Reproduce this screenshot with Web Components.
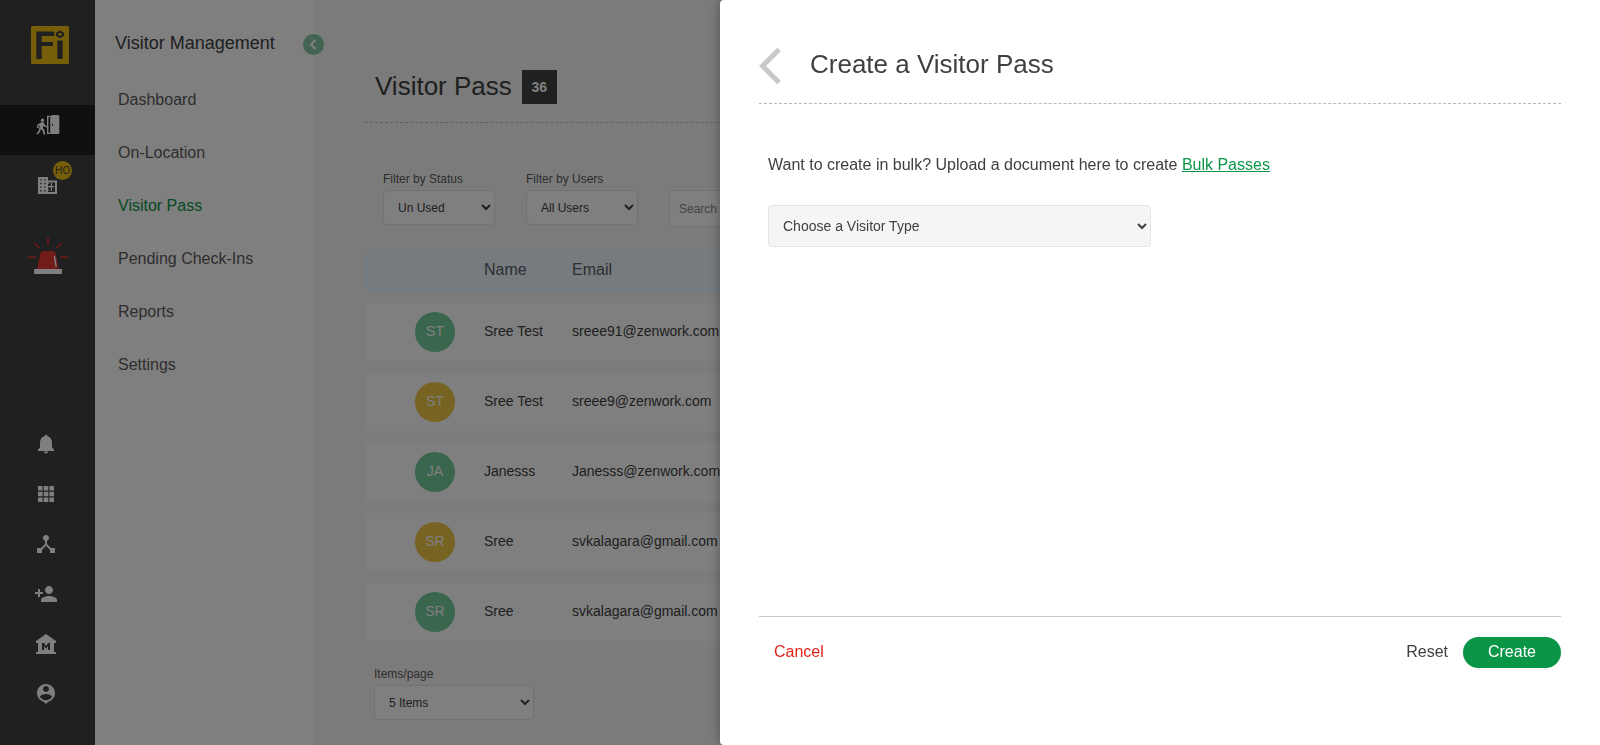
<!DOCTYPE html>
<html lang="en">
<head>
<meta charset="utf-8">
<title>Visitor Pass</title>
<style>
  html, body { margin: 0; height: 100%; }
  body { font-family: "Liberation Sans", Arial, sans-serif; font-size: 16px; color: #404040; background: #f6f6f6; }
</style>
</head>
<body>
<visitor-app></visitor-app>

<template id="t-app">
  <style>
    :host { display: grid; grid-template-columns: 95px 220px minmax(0, 1fr); min-height: 100vh; overflow: hidden; }
    .scrim { position: fixed; inset: 0; background: rgba(0, 0, 0, .5); z-index: 5; }
    create-drawer { z-index: 6; }
  </style>
  <icon-rail></icon-rail>
  <side-menu heading="Visitor Management">
    <menu-link>Dashboard</menu-link>
    <menu-link>On-Location</menu-link>
    <menu-link active>Visitor Pass</menu-link>
    <menu-link>Pending Check-Ins</menu-link>
    <menu-link>Reports</menu-link>
    <menu-link>Settings</menu-link>
  </side-menu>
  <pass-list></pass-list>
  <div class="scrim"></div>
  <create-drawer></create-drawer>
</template>

<template id="t-rail">
  <style>
    :host { display: flex; flex-direction: column; background: #404040; color: #fff; }
    a { display: flex; justify-content: center; color: inherit; text-decoration: none; }
    svg { display: block; fill: currentColor; }
    .logo { padding: 26px 0 41px 5px; }
    .door { background: #202020; height: 40px; padding-top: 10px; }
    .office { padding: 22px 0 5px; position: relative; }
    .badge { position: absolute; left: 53px; top: 6px; width: 19px; height: 19px; border-radius: 50%; background: #eebd12; color: #404040; font-family: Inter, sans-serif; font-size: 10px; line-height: 19px; text-align: center; }
    .alarm { padding-top: 36px; }
    .bottom { margin-top: auto; padding: 0 3px 39px 0; display: flex; flex-direction: column; gap: 26px; }
  </style>
  <a class="logo" href="#" aria-label="Home"><svg width="38" height="38" viewBox="0 0 38 38"><path fill="#eebd12" d="M1 0h36l1 1v36l-1 1H1l-1-1V1z"/><path fill="#404040" d="M5.300 5.500h18v4.500H10.700v6H22v4H10.700v13H5.300zM26.300 14.500h5.400V33h-5.400z"/><path fill="none" stroke="#404040" stroke-width="2" d="M29 5.700l3 1.600v2L29 11l-3-1.700v-2z"/></svg></a>
  <a class="door" href="#" aria-label="Visitors"><svg width="24" height="20" viewBox="0 0 24 20"><circle cx="6.500" cy="5.200" r="1.700"/><path d="M5.200 7.200l2.600.4 1.400 2.700 1.900.9-.6 1.300-2.500-1-.5-.8-.6 2.400 1.600 2.200.8 4.100H7.500l-.7-3.400-2-1.900-.6 2.300-2.400 3.200-1.500-.9 2.300-3L3.800 10l-1 .7-.5 2.200H.7l.8-3.200z"/><path d="M11 .8h3v1.400h-1.600v15.600H14V19h-3z"/><path fill-rule="evenodd" d="M14.200 1.200L16 0h6.500l.8 1v17.500l-.8.5H14.200zM16 9v1.800h1V9z"/></svg></a>
  <a class="office" href="#" aria-label="Offices"><svg width="19" height="17" viewBox="0 0 19 17"><path fill-rule="evenodd" d="M0 0h10v3.500h9V17H0zM2.200 2.200v1.400h1.400V2.200zM6.200 2.200v1.400h1.400V2.200zM2.200 5.800v1.400h1.400V5.800zM6.200 5.800v1.400h1.400V5.800zM2.200 9.400v1.400h1.400V9.400zM6.200 9.400v1.400h1.400V9.400zM2.200 13v1.400h1.400V13zM6.200 13v1.400h1.400V13zM10 5.500V15h7V5.500z"/><path d="M12.800 6h1.200v3h2.500v1.200H14V14h-1.200v-3.800H10V9h2.800zM10 6h1v1h-1zM10 12.500h1v1h-1z"/></svg><span class="badge">HO</span></a>
  <a class="alarm" href="#" aria-label="Emergency"><svg width="40" height="40" viewBox="0 0 40 40"><path stroke="#e53935" stroke-width="1.500" d="M20 3v7.500M6.500 8l5.200 5.500M33.500 8l-5.200 5.500M.5 22H8M32 22h7.500"/><path fill="#e53935" d="M9 34.500l3-14.500q.6-4 3.500-4h9q2.900 0 3.500 4l2.800 14.500z"/><path d="M26.500 21.500l1.500 9.500" stroke="#fff" stroke-width="1.500" stroke-linecap="round"/><path d="M6 34h28v5H6z"/></svg></a>
  <nav class="bottom">
    <a href="#" aria-label="Notifications"><svg width="24" height="24" viewBox="0 0 24 24"><path d="M12 21.500c1.100 0 2-.9 2-2h-4c0 1.100.9 2 2 2zm6-6v-5c0-3.070-1.630-5.640-4.500-6.320-.2-2-2.800-2-3 0C7.640 4.860 6 7.420 6 10.500v5l-2 2v1.500h16v-1.500z"/></svg></a>
    <a href="#" aria-label="Apps"><svg width="24" height="24" viewBox="0 0 24 24"><path d="M4 4h4.600v4.600H4zM9.700 4h4.600v4.600H9.700zM15.400 4H20v4.600h-4.600zM4 9.700h4.600v4.600H4zM9.700 9.700h4.600v4.600H9.700zM15.400 9.700H20v4.600h-4.600zM4 15.400h4.600V20H4zM9.700 15.400h4.600V20H9.700zM15.400 15.400H20V20h-4.600z"/></svg></a>
    <a href="#" aria-label="Hierarchy"><svg width="24" height="24" viewBox="0 0 24 24"><path d="M17 16l-4-4V8.820C14.160 8.400 15 7.300 15 6c0-1.660-1.340-3-3-3S9 4.340 9 6c0 1.300.84 2.400 2 2.820V12l-4 4H3v5h5v-3.050l4-4.200 4 4.200V21h5v-5z"/></svg></a>
    <a href="#" aria-label="Add person"><svg width="24" height="24" viewBox="0 0 24 24"><path d="M15 12c2.210 0 4-1.790 4-4s-1.790-4-4-4-4 1.790-4 4 1.790 4 4 4zm-9-2V7H4v3H1v2h3v3h2v-3h3v-2zm9 4c-2.670 0-8 1.340-8 4v2h16v-2c0-2.660-5.330-4-8-4z"/></svg></a>
    <a href="#" aria-label="Museum"><svg width="24" height="24" viewBox="0 0 24 24"><path d="M22 11V9L12 2 2 9v2h2v9H2v2h20v-2h-2v-9zm-6 7h-2v-4l-2 3-2-3v4H8v-7h2l2 3 2-3h2z"/></svg></a>
    <a href="#" aria-label="Profile"><svg width="24" height="24" viewBox="0 0 24 24"><path d="M12 2c-4.970 0-9 4.030-9 9 0 4.170 2.840 7.670 6.690 8.690L12 22l2.310-2.310C18.160 18.670 21 15.170 21 11c0-4.970-4.030-9-9-9zm0 2c1.660 0 3 1.340 3 3s-1.340 3-3 3-3-1.340-3-3 1.340-3 3-3zm0 14.300c-2.500 0-4.710-1.280-6-3.220.03-1.990 4-3.080 6-3.080 1.990 0 5.970 1.090 6 3.080-1.290 1.940-3.500 3.220-6 3.220z"/></svg></a>
  </nav>
</template>

<template id="t-menu">
  <style>
    :host { display: block; background: #fff; position: relative; }
    h2 { margin: 0; padding: 32px 20px 19px; font-size: 18px; line-height: 22px; font-weight: 400; }
    nav { display: flex; flex-direction: column; }
    button { position: absolute; right: -9px; top: 34px; width: 21px; height: 21px; padding: 0; border: 0; border-radius: 50%; background: #84c8a4; display: grid; place-items: center; z-index: 1; }
  </style>
  <h2></h2>
  <button aria-label="Collapse menu"><svg width="21" height="21" viewBox="0 0 21 21" fill="none" stroke="#fff" stroke-width="2"><path d="M12.500 6L8 10.500l4.500 4.500"/></svg></button>
  <nav><slot></slot></nav>
</template>

<template id="t-link">
  <style>
    :host { display: block; }
    a { display: block; padding: 0 23px; line-height: 53px; color: #5c5c5c; text-decoration: none; }
    :host([active]) a { color: #0b9547; }
  </style>
  <a href="#"><slot></slot></a>
</template>

<template id="t-select">
  <style>
    :host { display: flex; flex-direction: column; gap: 4px; font-size: 12px; }
    label { line-height: 14px; color: #5c5c5c; }
    select { height: 35px; width: 100%; box-sizing: border-box; padding: 0 10px; border: 1px solid #e5e5e5; border-radius: 4px; background-color: #fff; color: #404040; font: inherit; }
    :host([large]) { font-size: 14px; }
    :host([large]) select { height: 42px; background-color: #f5f5f5; }
    label:empty { display: none; }
  </style>
  <label for="s"></label>
  <select id="s"></select>
</template>

<template id="t-avatar">
  <style>
    :host { display: block; width: 40px; height: 40px; line-height: 38px; text-align: center; border-radius: 50%; background: #74cc9c; color: #fff; font-size: 14px; }
    :host([tone="gold"]) { background: #eec644; }
  </style>
  <slot></slot>
</template>

<template id="t-list">
  <style>
    :host { display: block; padding: 70px 50px 20px; }
    header { display: flex; align-items: center; gap: 10px; padding: 0 10px 18px; border-bottom: 1px dashed #c0c0c0; }
    h1 { margin: 0; padding-bottom: 2px; font-size: 26px; line-height: 30px; font-weight: 400; }
    .count { width: 35px; background: #404040; color: #fff; font-size: 14px; font-weight: 700; line-height: 34px; text-align: center; }
    .filters { display: flex; align-items: flex-end; gap: 31px; padding: 49px 18px 0; }
    .filters pick-list { width: 112px; padding-bottom: 2px; }
    input { box-sizing: border-box; width: 240px; height: 37px; padding: 0 9px; border: 1px solid #e5e5e5; background: #fff; font: 12px "Liberation Sans", Arial, sans-serif; }
    input::placeholder { color: #8a8a8a; }
    table { width: 100%; table-layout: fixed; border-collapse: separate; border-spacing: 0 12px; margin-top: 10px; }
    th, td { padding: 0 13px; text-align: left; }
    th { height: 42px; background: #eaf6ff; font-weight: 400; color: #5c5c5c; }
    td { height: 56px; padding-bottom: 2px; background: #fff; font-size: 14px; }
    td.face { height: 57px; padding-bottom: 1px; }
    .face { width: 56px; padding-left: 50px; padding-right: 0; }
    .name { width: 62px; }
    .pager { width: 160px; margin: 14px 9px 0; }
  </style>
  <header><h1>Visitor Pass</h1><span class="count">36</span></header>
  <div class="filters">
    <pick-list label="Filter by Status" value="Un Used"></pick-list>
    <pick-list label="Filter by Users" value="All Users"></pick-list>
    <input type="text" placeholder="Search" aria-label="Search">
  </div>
  <table>
    <thead><tr><th class="face"></th><th class="name">Name</th><th>Email</th></tr></thead>
    <tbody></tbody>
  </table>
  <pick-list class="pager" label="Items/page" value="5 Items"></pick-list>
</template>

<template id="t-drawer">
  <style>
    :host { position: fixed; top: 0; right: 0; bottom: 0; width: 55%; box-sizing: border-box; padding: 0 39px 77px; display: flex; flex-direction: column; background: #fff; border-radius: 4px 0 0 4px; box-shadow: 0 0 12px rgba(0, 0, 0, .35); }
    header { display: flex; align-items: center; gap: 29px; padding: 46px 0 17px; border-bottom: 1px dashed #b8b8b8; }
    button { border: 0; padding: 0; background: none; font: inherit; color: #404040; }
    .back svg { display: block; }
    h2 { margin: 0; padding-bottom: 4px; font-size: 26px; line-height: 34px; font-weight: 400; }
    .body { flex: 1; padding: 52px 9px 0; }
    p { margin: 0 0 31px; line-height: 18px; }
    a { color: #0b9547; }
    pick-list { width: calc(50% - 9px); min-width: 200px; }
    footer { display: flex; border-top: 1px solid #c8c8c8; padding-top: 20px; }
    footer button { height: 31px; padding-bottom: 2px; }
    .cancel { padding-left: 15px; margin-right: auto; color: #e1251b; }
    .create { margin-left: 15px; width: 98px; border-radius: 16px; background: #0b9547; color: #fff; }
  </style>
  <header>
    <button class="back" aria-label="Back"><svg width="22" height="40" viewBox="0 0 22 40" fill="none" stroke="#c8c8c8" stroke-width="5"><path d="M20 3.500L3.500 20 20 36.500"/></svg></button>
    <h2>Create a Visitor Pass</h2>
  </header>
  <div class="body">
    <p>Want to create in bulk? Upload a document here to create <a href="#">Bulk Passes</a></p>
    <pick-list large value="Choose a Visitor Type"></pick-list>
  </div>
  <footer>
    <button class="cancel">Cancel</button>
    <button>Reset</button>
    <button class="create">Create</button>
  </footer>
</template>

<script>
  class Base extends HTMLElement {
    constructor() {
      super();
      this.attachShadow({ mode: "open" }).append(
        document.getElementById(this.constructor.template).content.cloneNode(true));
    }
    $(selector) { return this.shadowRoot.querySelector(selector); }
  }

  customElements.define("icon-rail", class extends Base { static template = "t-rail"; });
  customElements.define("menu-link", class extends Base { static template = "t-link"; });
  customElements.define("user-avatar", class extends Base { static template = "t-avatar"; });

  customElements.define("side-menu", class extends Base {
    static template = "t-menu";
    connectedCallback() { this.$("h2").textContent = this.getAttribute("heading"); }
  });

  customElements.define("pick-list", class extends Base {
    static template = "t-select";
    connectedCallback() {
      const label = this.getAttribute("label") || "";
      const value = this.getAttribute("value");
      this.$("label").textContent = label;
      if (!label) this.$("select").setAttribute("aria-label", value);
      this.$("select").replaceChildren(new Option(value));
    }
  });

  const visitors = [
    ["ST", "green", "Sree Test", "sreee91@zenwork.com"],
    ["ST", "gold", "Sree Test", "sreee9@zenwork.com"],
    ["JA", "green", "Janesss", "Janesss@zenwork.com"],
    ["SR", "gold", "Sree", "svkalagara@gmail.com"],
    ["SR", "green", "Sree", "svkalagara@gmail.com"],
  ];

  customElements.define("pass-list", class extends Base {
    static template = "t-list";
    connectedCallback() {
      this.$("tbody").innerHTML = visitors.map(([initials, tone, name, email]) =>
        `<tr><td class="face"><user-avatar tone="${tone}">${initials}</user-avatar></td><td class="name">${name}</td><td>${email}</td></tr>`
      ).join("");
    }
  });

  customElements.define("create-drawer", class extends Base { static template = "t-drawer"; });
  customElements.define("visitor-app", class extends Base { static template = "t-app"; });
</script>
</body>
</html>
